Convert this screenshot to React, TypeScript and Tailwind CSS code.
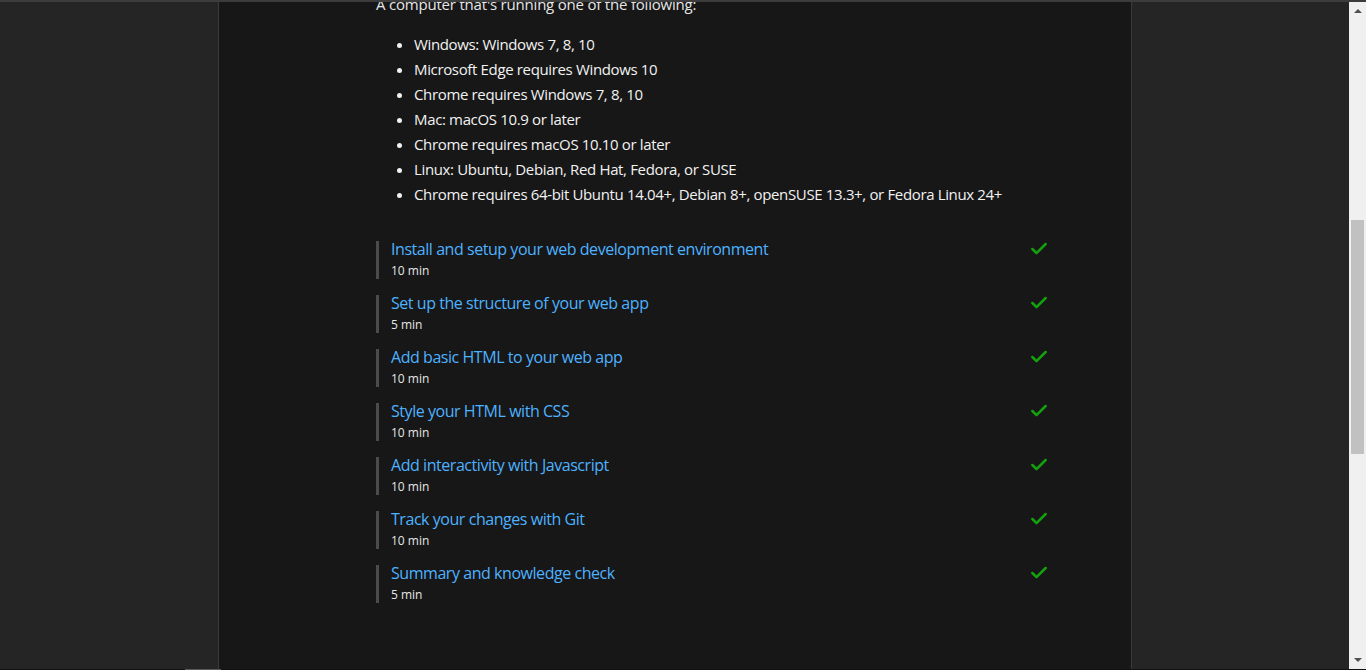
import { Check } from "lucide-react";

const requirements = [
  "Windows: Windows 7, 8, 10",
  "Microsoft Edge requires Windows 10",
  "Chrome requires Windows 7, 8, 10",
  "Mac: macOS 10.9 or later",
  "Chrome requires macOS 10.10 or later",
  "Linux: Ubuntu, Debian, Red Hat, Fedora, or SUSE",
  "Chrome requires 64-bit Ubuntu 14.04+, Debian 8+, openSUSE 13.3+, or Fedora Linux 24+",
];

const units = [
  { title: "Install and setup your web development environment", time: "10 min" },
  { title: "Set up the structure of your web app", time: "5 min" },
  { title: "Add basic HTML to your web app", time: "10 min" },
  { title: "Style your HTML with CSS", time: "10 min" },
  { title: "Add interactivity with Javascript", time: "10 min" },
  { title: "Track your changes with Git", time: "10 min" },
  { title: "Summary and knowledge check", time: "5 min" },
];

function Scrollbar() {
  return (
    <div className="w-[17px] h-full bg-[#f0f0f0] flex flex-col items-center relative">
      <div className="mt-[7px] w-0 h-0 border-l-[4px] border-r-[4px] border-b-[4px] border-l-transparent border-r-transparent border-b-[#505050]" />
      <div className="absolute top-[218px] left-[2px] w-[13px] h-[234px] bg-[#c1c1c1]" />
      <div className="mt-auto mb-[7px] w-0 h-0 border-l-[4px] border-r-[4px] border-t-[4px] border-l-transparent border-r-transparent border-t-[#505050]" />
    </div>
  );
}

export default function App() {
  return (
    <div
      className="h-[670px] w-[1366px] overflow-hidden bg-[#252525] flex flex-col"
      style={{ fontFamily: "'Open Sans', 'Noto Sans', sans-serif" }}
    >
      <div className="h-[2px] bg-[#3c3c3c]" />
      <div className="flex flex-1 min-h-0">
        <div className="w-[218px] shrink-0" />
        {/* main content column */}
        <div className="w-[914px] shrink-0 bg-[#171717] border-x border-[#3a3a3a] overflow-hidden">
          <div className="pl-[157px] pr-[82px]">
            <p className="text-[15px] leading-[20px] text-[#e6e6e6] -mt-[8px] tracking-[-0.2px]">
              A computer that's running one of the following:
            </p>

            <ul className="list-disc pl-[38px] mt-[18px] text-[15px] leading-[25px] text-[#f2f2f2] tracking-[-0.35px]">
              {requirements.map((r) => (
                <li key={r}>{r}</li>
              ))}
            </ul>

            <div className="mt-[34px] flex flex-col gap-[16px]">
              {units.map((u) => (
                <div key={u.title} className="flex items-start justify-between">
                  <div className="border-l-[3px] border-[#4b4b4b] pl-[12px] h-[38px] flex flex-col">
                    <a className="text-[16px] leading-[20px] text-[#4db2ff] tracking-[-0.45px] -mt-[2px]">
                      {u.title}
                    </a>
                    <span className="text-[12px] leading-[16px] text-[#e6e6e6] mt-[4px]">{u.time}</span>
                  </div>
                  <Check className="w-[20px] h-[20px] text-[#13a10e] mt-[-2px]" strokeWidth={3} />
                </div>
              ))}
            </div>
          </div>
        </div>
        <div className="flex-1" />
        <Scrollbar />
      </div>
      <div className="h-[1px] bg-[#111111] relative">
        <div className="absolute left-[185px] w-[36px] h-[1px] bg-[#5a5a5a]" />
      </div>
    </div>
  );
}
